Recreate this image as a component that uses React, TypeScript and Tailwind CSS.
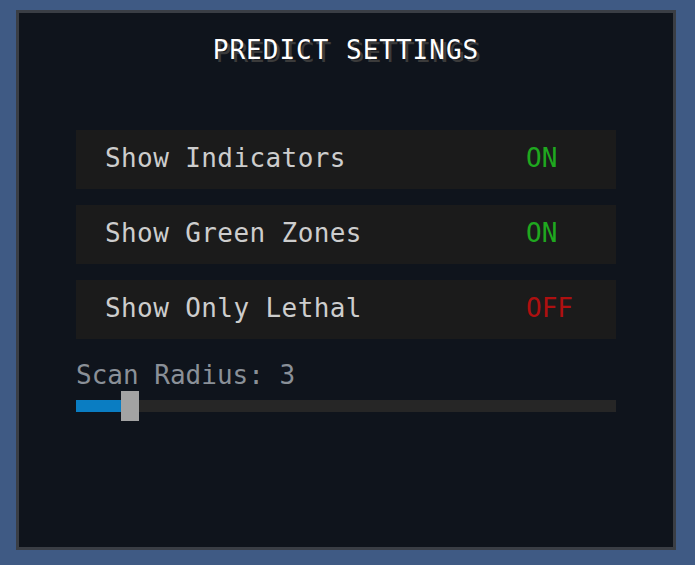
import React from "react";

type Toggle = {
  label: string;
  on: boolean;
};

const toggles: Toggle[] = [
  { label: "Show Indicators", on: true },
  { label: "Show Green Zones", on: true },
  { label: "Show Only Lethal", on: false },
];

const font = { fontFamily: '"DejaVu Sans Mono", "Liberation Mono", monospace' };

export default function App() {
  const radius = 3;

  return (
    <div className="w-[695px] h-[565px] bg-[#3f5a84] pt-[10px] pl-[16px]" style={font}>
      <div className="w-[660px] h-[540px] border-[3px] border-[#3a3e45] bg-[#0f141c] px-[57px] pt-[22px]">
        <h1 className="text-center text-[26px] leading-[30px] tracking-[1px] text-white [text-shadow:3px_3px_0_#3b3b3b]">
          PREDICT SETTINGS
        </h1>

        <div className="mt-[65px] flex flex-col gap-[16px]">
          {toggles.map((t) => (
            <div
              key={t.label}
              className="flex h-[59px] items-center bg-[#1b1b1b] pl-[29px] pb-[3px] text-[26px] leading-[30px]"
            >
              <span className="text-[#cdcdcd] tracking-[0.4px]">{t.label}</span>
              <span className={`ml-auto w-[90px] ${t.on ? "text-[#1fa81f]" : "text-[#ae1010]"}`}>
                {t.on ? "ON" : "OFF"}
              </span>
            </div>
          ))}
        </div>

        <div className="mt-[21px] text-[26px] leading-[30px] text-[#8a9098]">
          Scan Radius: {radius}
        </div>

        <div className="relative mt-[1px] flex h-[30px] items-center">
          <div className="h-[12px] w-full bg-[#262626]">
            <div className="h-full w-[45px] bg-[#0a7dc2]" />
          </div>
          <div className="absolute left-[45px] top-0 h-[30px] w-[18px] bg-[#a3a3a3]" />
        </div>
      </div>
    </div>
  );
}
